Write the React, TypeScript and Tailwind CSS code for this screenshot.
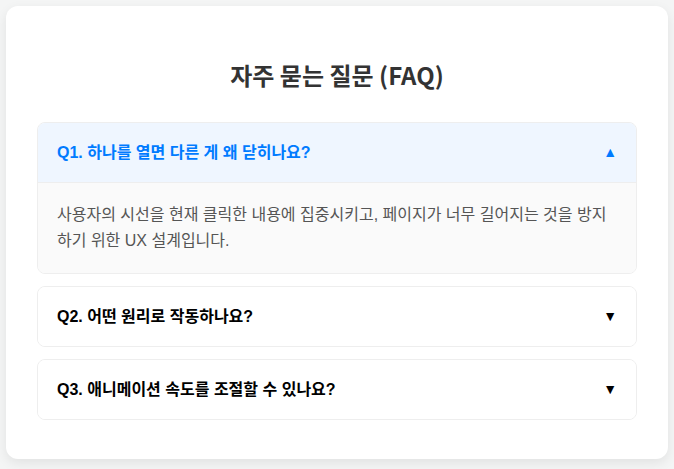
import { useState } from "react";

const faqs = [
  {
    q: "Q1. 하나를 열면 다른 게 왜 닫히나요?",
    a: "사용자의 시선을 현재 클릭한 내용에 집중시키고, 페이지가 너무 길어지는 것을 방지하기 위한 UX 설계입니다.",
  },
  {
    q: "Q2. 어떤 원리로 작동하나요?",
    a: "버튼을 클릭하면 상태가 바뀌고, 열린 항목의 높이가 부드럽게 늘어납니다.",
  },
  {
    q: "Q3. 애니메이션 속도를 조절할 수 있나요?",
    a: "transition 속성의 시간 값을 바꾸면 속도를 자유롭게 조절할 수 있습니다.",
  },
];

function App() {
  const [open, setOpen] = useState(0);

  return (
    <div className="min-h-screen bg-[#f4f5f5] p-[6px] font-['Liberation_Sans','Noto_Sans_CJK_KR',sans-serif]">
      <div className="rounded-xl bg-white px-[31px] pt-[31px] pb-[39px] shadow-[0_4px_12px_rgba(0,0,0,0.08)]">
        <h2 className="mt-[20px] mb-[29px] text-center font-['Noto_Sans_CJK_KR',sans-serif] text-2xl leading-9 font-bold text-[#333]">
          자주 묻는 질문 (FAQ)
        </h2>

        <div className="flex flex-col gap-3">
          {faqs.map((item, i) => {
            const isOpen = open === i;
            return (
              <div
                key={item.q}
                className="overflow-hidden rounded-lg border border-[#eee]"
              >
                <button
                  onClick={() => setOpen(isOpen ? -1 : i)}
                  className={
                    isOpen
                      ? "flex w-full items-center justify-between bg-[#eff6ff] px-[19px] py-5 text-left text-base leading-[19px] font-bold text-[#007bff]"
                      : "flex w-full items-center justify-between bg-white px-[19px] py-5 text-left text-base leading-[19px] font-bold text-black"
                  }
                >
                  <span>{item.q}</span>
                  <span className="text-[14px]">{isOpen ? "▲" : "▼"}</span>
                </button>
                {isOpen && (
                  <div className="border-t border-[#eee] bg-[#fafafa] px-[19px] pt-[19px] pb-[19px] text-base leading-[26px] text-[#555]">
                    {item.a}
                  </div>
                )}
              </div>
            );
          })}
        </div>
      </div>
    </div>
  );
}

export default App;
